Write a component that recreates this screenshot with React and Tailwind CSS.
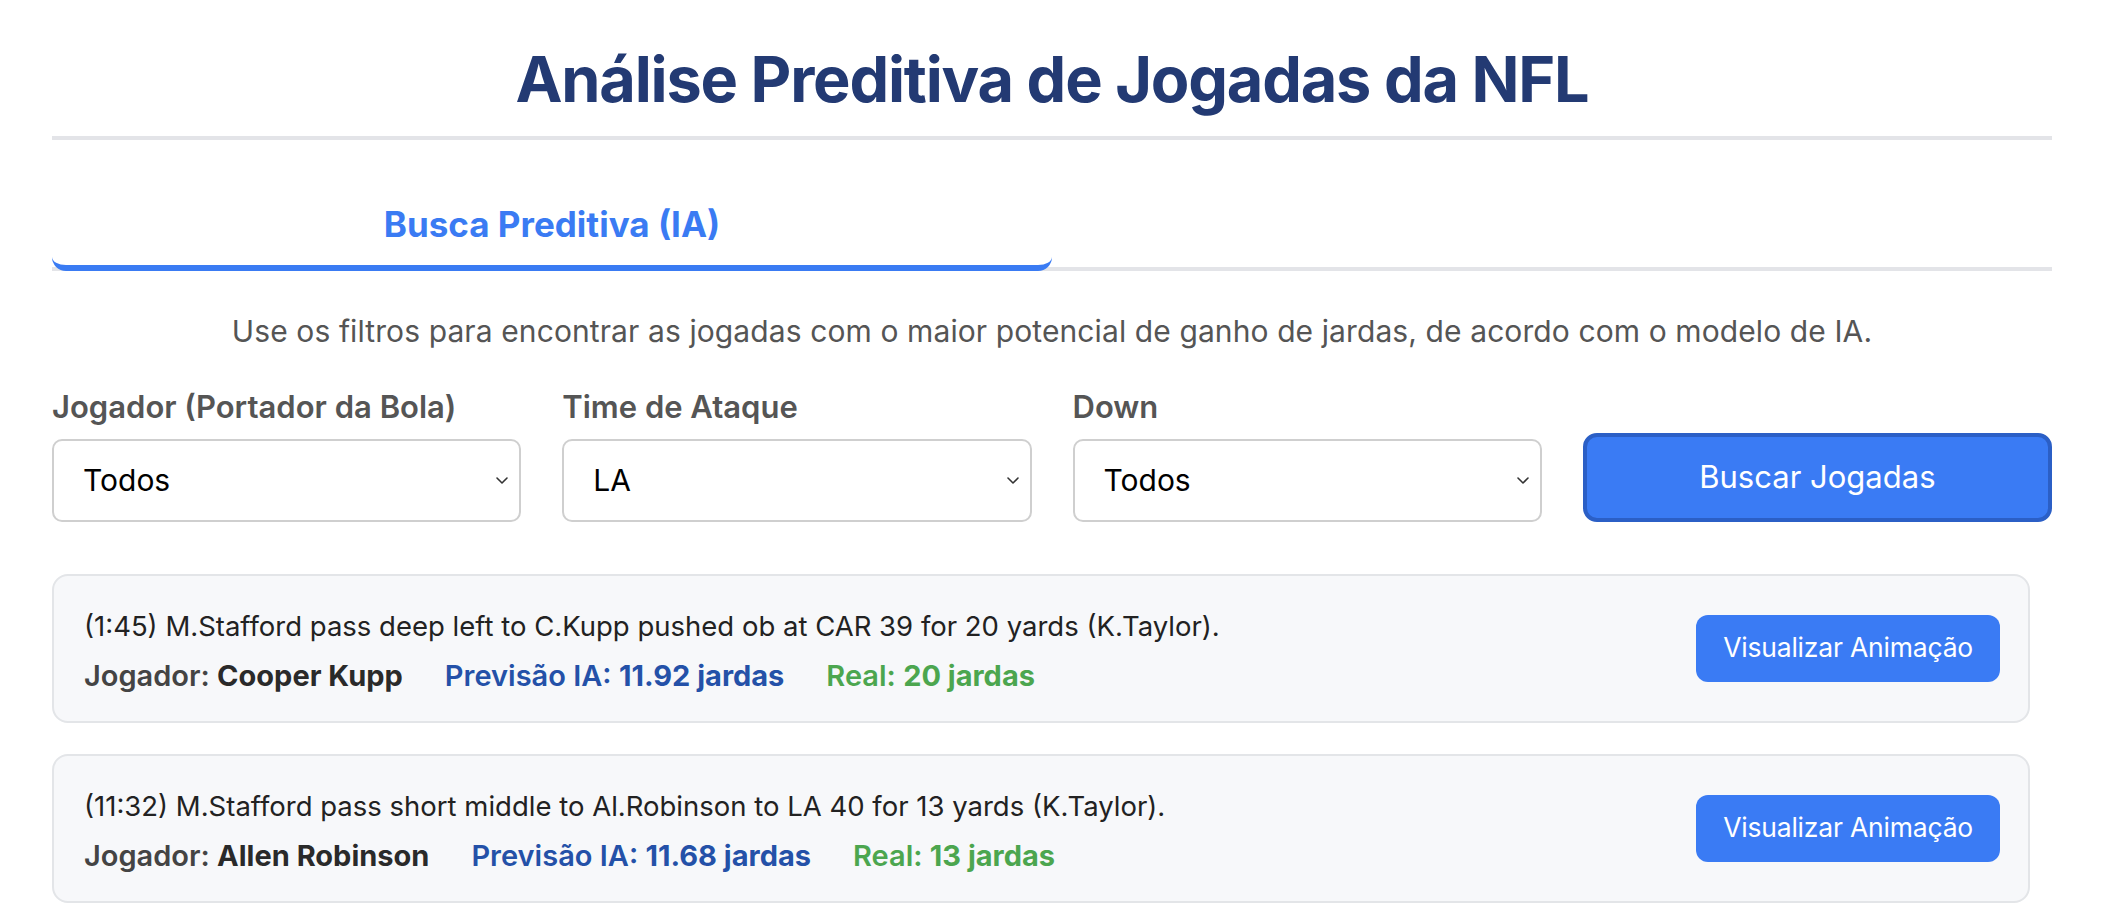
import React from 'react';

const plays = [
  {
    desc: '(1:45) M.Stafford pass deep left to C.Kupp pushed ob at CAR 39 for 20 yards (K.Taylor).',
    player: 'Cooper Kupp',
    pred: '11.92',
    real: '20',
  },
  {
    desc: '(11:32) M.Stafford pass short middle to Al.Robinson to LA 40 for 13 yards (K.Taylor).',
    player: 'Allen Robinson',
    pred: '11.68',
    real: '13',
  },
];

const Chevron = () => (
  <svg className="pointer-events-none absolute right-[12px] top-1/2 -translate-y-1/2" width="14" height="10" viewBox="0 0 14 10" fill="none">
    <path d="M2 3l5 5 5-5" stroke="#333" strokeWidth="1.6" strokeLinecap="round" strokeLinejoin="round" />
  </svg>
);

const Filter = ({ label, value }) => (
  <div className="flex flex-col">
    <label className="mb-[8px] text-[31px] font-semibold text-[#555]">{label}</label>
    <div className="relative">
      <select
        defaultValue={value}
        className="h-[83px] w-full appearance-none rounded-[10px] border-2 border-[#cfcfcf] bg-white px-[29px] text-[30px] text-black"
      >
        <option>{value}</option>
      </select>
      <Chevron />
    </div>
  </div>
);

export default function App() {
  return (
    <div className="min-h-screen bg-white font-['Inter',sans-serif]">
      <div className="mx-auto w-[2000px]">
        {/* Header */}
        <h1 className="border-b-4 border-[#e3e4e8] pb-[18px] pt-[42px] text-center text-[63px] font-bold leading-[1.2] tracking-[-1.2px] text-[#233a73]">
          Análise Preditiva de Jogadas da NFL
        </h1>

        {/* Tabs */}
        <div className="mt-[51px] flex border-b-4 border-[#e3e4e8]">
          <button className="-mb-[4px] w-1/2 rounded-[14px] border-b-[6px] border-[#3a7bf3] pb-[15px] pt-[7px] text-[35px] font-bold text-[#3a7bf3]">
            Busca Preditiva (IA)
          </button>
        </div>

        <p className="mt-[38px] text-center text-[30px] tracking-[0.1px] text-[#555]">
          Use os filtros para encontrar as jogadas com o maior potencial de ganho de jardas, de acordo com o modelo de IA.
        </p>

        {/* Filters */}
        <div className="mt-[30px] grid grid-cols-4 items-end gap-x-[41px]">
          <Filter label="Jogador (Portador da Bola)" value="Todos" />
          <Filter label="Time de Ataque" value="LA" />
          <Filter label="Down" value="Todos" />
          <button className="h-[89px] rounded-[14px] border-4 border-[#2b5fc6] bg-[#3a7bf4] text-[31px] text-white">
            Buscar Jogadas
          </button>
        </div>

        {/* Results */}
        <div className="mt-[52px] mr-[22px] flex flex-col gap-[31px]">
          {plays.map((p) => (
            <div
              key={p.player}
              className="flex h-[149px] items-center justify-between rounded-[16px] border-2 border-[#e3e5e8] bg-[#f7f8fa] pl-[30px] pr-[28px]"
            >
              <div className="flex flex-col gap-[10px] pt-[6px]">
                <p className="text-[27.5px] leading-[40px] text-[#222]">{p.desc}</p>
                <div className="flex gap-[42px] text-[29px] font-semibold leading-[40px]">
                  <span className="text-[#444]">
                    Jogador: <span className="font-bold text-[#2a2a2a]">{p.player}</span>
                  </span>
                  <span className="text-[#2451a8]">
                    Previsão IA: <span className="font-bold">{p.pred} jardas</span>
                  </span>
                  <span className="text-[#4ca64f]">
                    Real: <span className="font-bold">{p.real} jardas</span>
                  </span>
                </div>
              </div>
              <button className="h-[67px] rounded-[12px] bg-[#3a7bf4] px-[27px] text-[26.5px] tracking-[-0.2px] text-white">
                Visualizar Animação
              </button>
            </div>
          ))}
        </div>
      </div>
    </div>
  );
}
